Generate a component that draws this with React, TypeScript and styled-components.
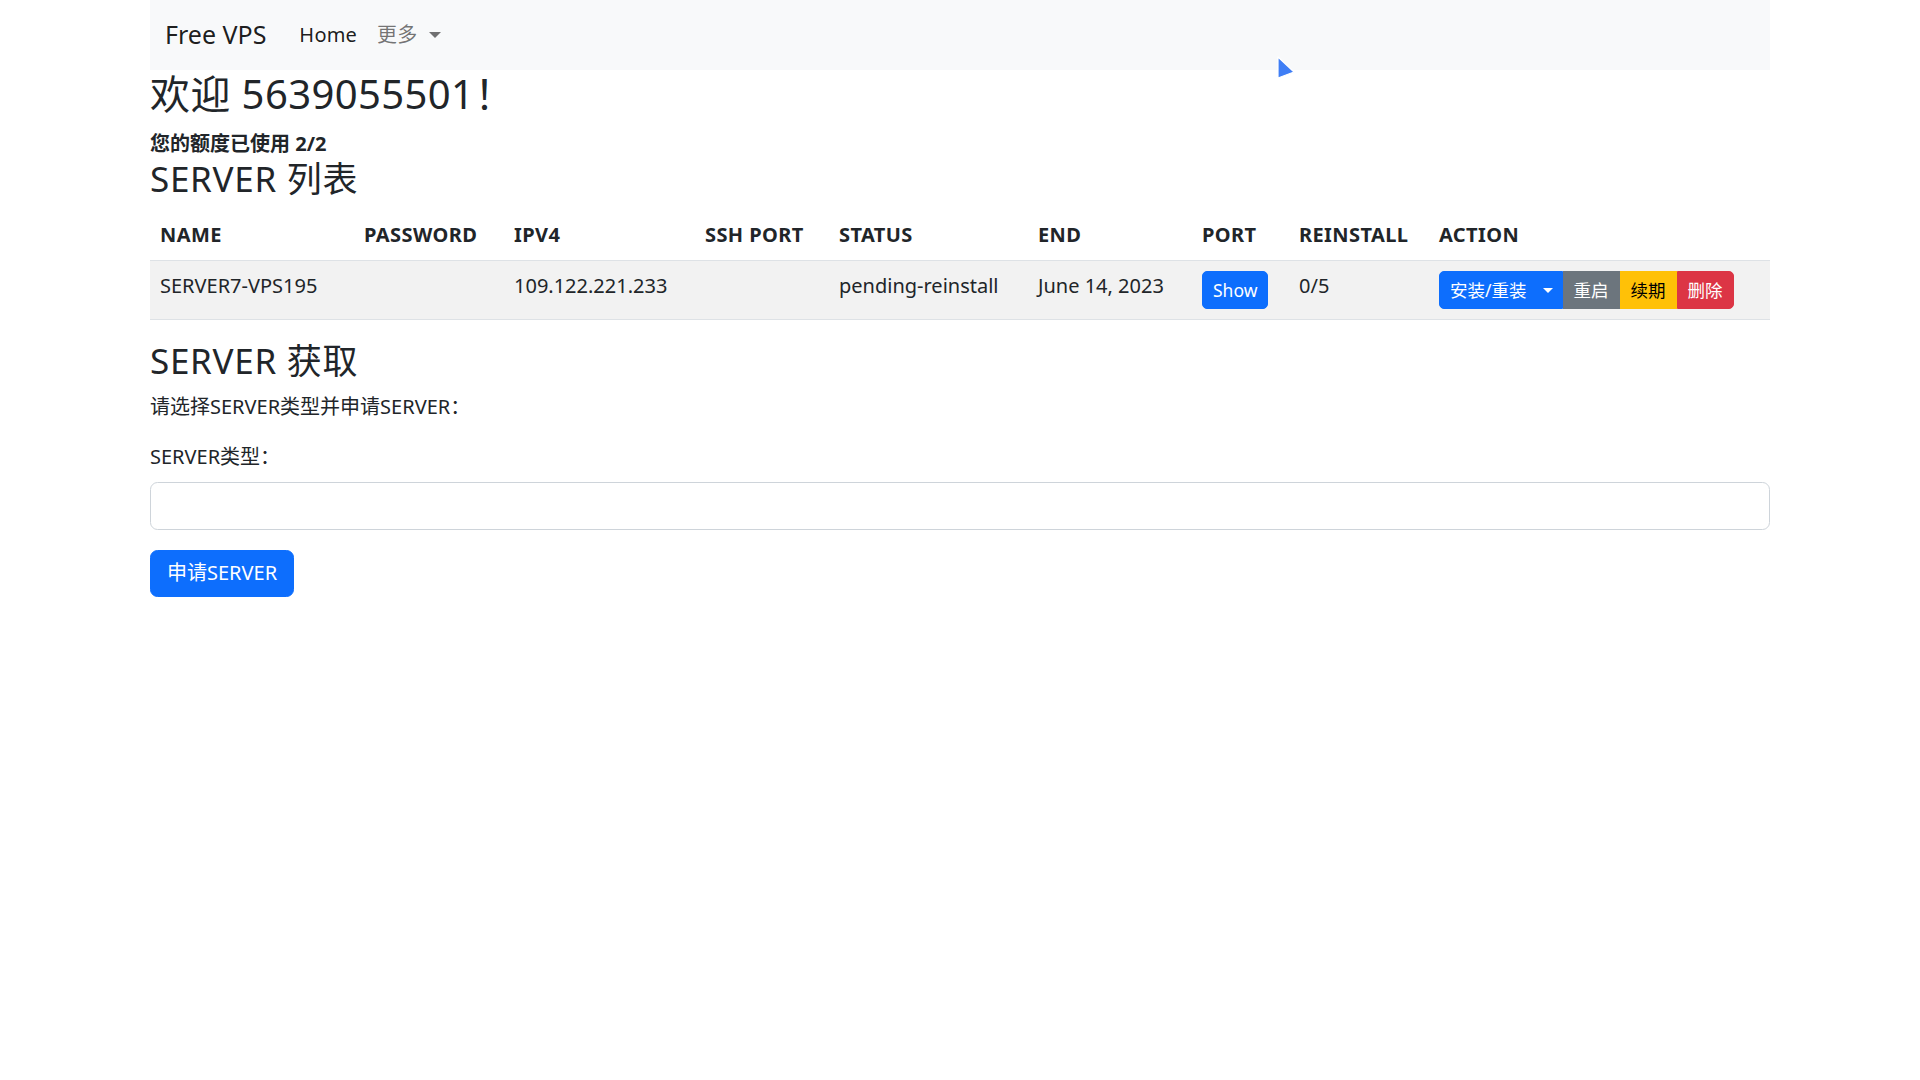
import styled, { createGlobalStyle } from "styled-components";

const GlobalStyle = createGlobalStyle`
  html, body {
    margin: 0;
    padding: 0;
    background: #fff;
  }
  body {
    font-family: "Noto Sans", "Noto Sans CJK SC", sans-serif;
    font-size: 20px;
    line-height: 1.5;
    color: #212529;
  }
  * {
    box-sizing: border-box;
  }
`;

const rows = [
  {
    name: "SERVER7-VPS195",
    password: "",
    ipv4: "109.122.221.233",
    sshPort: "",
    status: "pending-reinstall",
    end: "June 14, 2023",
    reinstall: "0/5",
  },
];

function App() {
  return (
    <>
      <GlobalStyle />
      <Container>
        <Navbar>
          <Brand>Free VPS</Brand>
          <NavLink $active>Home</NavLink>
          <NavLink>
            更多
            <Caret $color="rgba(0, 0, 0, 0.55)" $gap={12} $size={6} />
          </NavLink>
        </Navbar>

        <Title>欢迎 5639055501！</Title>
        <Quota>您的额度已使用 2/2</Quota>
        <SectionTitle>SERVER 列表</SectionTitle>

        <Table>
          <thead>
            <tr>
              <Th $w={204}>NAME</Th>
              <Th $w={150}>PASSWORD</Th>
              <Th $w={191}>IPV4</Th>
              <Th $w={134}>SSH PORT</Th>
              <Th $w={199}>STATUS</Th>
              <Th $w={164}>END</Th>
              <Th $w={97}>PORT</Th>
              <Th $w={140}>REINSTALL</Th>
              <Th>ACTION</Th>
            </tr>
          </thead>
          <tbody>
            {rows.map((row) => (
              <BodyRow key={row.name}>
                <Td>{row.name}</Td>
                <Td>{row.password}</Td>
                <Td>{row.ipv4}</Td>
                <Td>{row.sshPort}</Td>
                <Td>{row.status}</Td>
                <Td>{row.end}</Td>
                <Td>
                  <SmallButton $bg="#0d6efd" $fg="#fff" $round="all">
                    Show
                  </SmallButton>
                </Td>
                <Td>{row.reinstall}</Td>
                <Td>
                  <ButtonGroup>
                    <SmallButton $bg="#0d6efd" $fg="#fff" $round="left">
                      安装/重装
                      <SplitCaret>
                        <Caret $color="#fff" $gap={0} $size={5} />
                      </SplitCaret>
                    </SmallButton>
                    <SmallButton $bg="#6c757d" $fg="#fff" $round="none">
                      重启
                    </SmallButton>
                    <SmallButton $bg="#ffc107" $fg="#000" $round="none">
                      续期
                    </SmallButton>
                    <SmallButton $bg="#dc3545" $fg="#fff" $round="right">
                      删除
                    </SmallButton>
                  </ButtonGroup>
                </Td>
              </BodyRow>
            ))}
          </tbody>
        </Table>

        <SectionTitle>SERVER 获取</SectionTitle>
        <Paragraph>请选择SERVER类型并申请SERVER：</Paragraph>
        <Label>SERVER类型：</Label>
        <Input type="text" />
        <PrimaryButton>申请SERVER</PrimaryButton>
      </Container>

      <Cursor width="20" height="24" viewBox="0 0 20 24">
        <polygon
          points="1,1 1,22 17,16"
          fill="#3f7ef5"
          stroke="#ffffff"
          strokeWidth="1.2"
          strokeLinejoin="round"
        />
      </Cursor>
    </>
  );
}

const Container = styled.div`
  width: 1620px;
  margin: 0 auto;
`;

const Navbar = styled.nav`
  display: flex;
  align-items: center;
  height: 70px;
  padding: 0 15px;
  background-color: #f8f9fa;
`;

const Brand = styled.span`
  font-size: 25px;
  line-height: 37.5px;
  color: rgba(0, 0, 0, 0.9);
  margin-right: 23px;
`;

const NavLink = styled.span<{ $active?: boolean }>`
  display: flex;
  align-items: center;
  padding: 10px;
  font-size: 20px;
  line-height: 30px;
  letter-spacing: 0.2px;
  color: ${(p) => (p.$active ? "rgba(0, 0, 0, 0.9)" : "rgba(0, 0, 0, 0.55)")};
`;

const Caret = styled.span<{ $color: string; $gap: number; $size: number }>`
  display: inline-block;
  width: 0;
  height: 0;
  margin-left: ${(p) => p.$gap}px;
  border-top: ${(p) => p.$size}px solid ${(p) => p.$color};
  border-left: ${(p) => p.$size}px solid transparent;
  border-right: ${(p) => p.$size}px solid transparent;
`;

const Title = styled.h2`
  margin: 0 0 14px;
  font-size: 40px;
  font-weight: 400;
  line-height: 48px;
  letter-spacing: 0.4px;
`;

const Quota = styled.h6`
  margin: 0 0 2px;
  font-size: 20px;
  font-weight: 700;
  line-height: 24px;
`;

const SectionTitle = styled.h3`
  margin: 0 0 10px;
  font-size: 35px;
  font-weight: 400;
  line-height: 42px;
  letter-spacing: 0.7px;
`;

const Table = styled.table`
  width: 100%;
  border-collapse: collapse;
  margin-bottom: 20px;
  vertical-align: top;
`;

const Th = styled.th<{ $w?: number }>`
  width: ${(p) => (p.$w ? `${p.$w}px` : "auto")};
  padding: 10px;
  text-align: left;
  font-weight: 700;
  line-height: 30px;
  letter-spacing: 0.4px;
  border-bottom: 1px solid #dee2e6;
`;

const BodyRow = styled.tr`
  background-color: #f2f2f2;
`;

const Td = styled.td`
  padding: 10px;
  line-height: 30px;
  vertical-align: top;
  white-space: nowrap;
  border-bottom: 1px solid #dee2e6;
`;

const ButtonGroup = styled.div`
  display: inline-flex;
`;

const radius = {
  all: "5px",
  left: "5px 0 0 5px",
  right: "0 5px 5px 0",
  none: "0",
};

const SmallButton = styled.span<{
  $bg: string;
  $fg: string;
  $round: keyof typeof radius;
}>`
  display: inline-flex;
  align-items: center;
  padding: 5px 10px;
  font-size: 17.5px;
  line-height: 26px;
  border: 1px solid ${(p) => p.$bg};
  border-radius: ${(p) => radius[p.$round]};
  background-color: ${(p) => p.$bg};
  color: ${(p) => p.$fg};
`;

const SplitCaret = styled.span`
  display: inline-flex;
  align-items: center;
  margin-left: 16px;
  margin-right: -1px;
`;

const Paragraph = styled.p`
  margin: 0 0 20px;
  line-height: 30px;
`;

const Label = styled.label`
  display: block;
  margin-bottom: 10px;
  line-height: 30px;
`;

const Input = styled.input`
  display: block;
  width: 100%;
  height: 47.5px;
  padding: 7.5px 15px;
  font-size: 20px;
  border: 1px solid #ced4da;
  border-radius: 7.5px;
  background: #fff;
  margin-bottom: 20px;
`;

const PrimaryButton = styled.button`
  display: inline-block;
  padding: 7.5px 16px;
  font-family: "Noto Sans", "Noto Sans CJK SC", sans-serif;
  font-size: 20px;
  line-height: 30px;
  color: #fff;
  background-color: #0d6efd;
  border: 1px solid #0d6efd;
  border-radius: 7.5px;
`;

const Cursor = styled.svg`
  position: absolute;
  left: 1277px;
  top: 56px;
`;

export default App;
